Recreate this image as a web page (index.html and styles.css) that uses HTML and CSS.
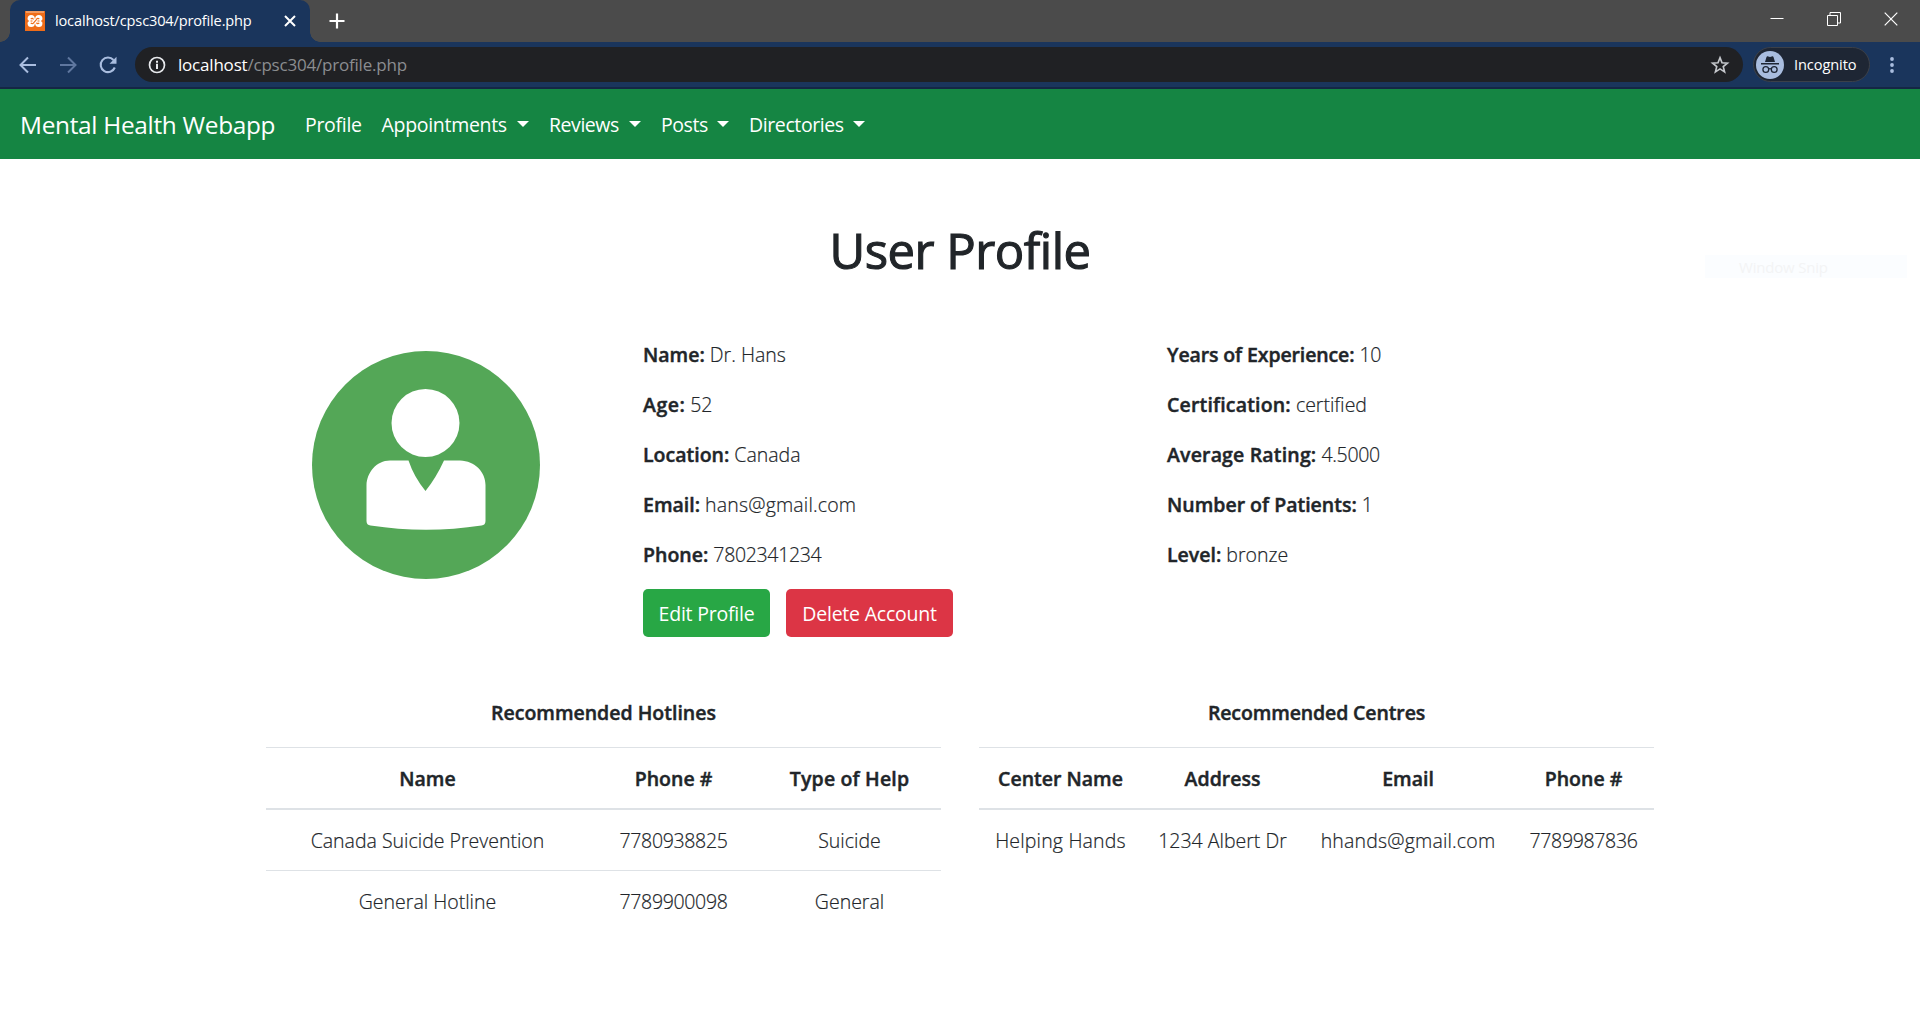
FILE: index.html
```html
<!DOCTYPE html>
<html lang="en">
<head>
<meta charset="utf-8">
<title>User Profile</title>
<link rel="stylesheet" href="styles.css">
</head>
<body>
<header class="browser">
  <div class="tabstrip">
    <div class="tab">
      <svg class="favicon" viewBox="0 0 20 20"><rect width="20" height="20" fill="#ef6c18"/><path d="M1 1h18" stroke="#f5b080" stroke-width="1.400"/><g fill="#fff"><circle cx="6.200" cy="7.600" r="3.600"/><circle cx="13.800" cy="7.600" r="3.600"/><circle cx="6.200" cy="12.500" r="3.600"/><circle cx="13.800" cy="12.500" r="3.600"/><path d="M6 8h8v4.500H6z"/></g><path d="M14.300 7.900Q12.400 6.600 11.400 8.600L8.600 11.800Q7.600 13.300 5.700 12.100M5.700 7.900Q7.600 6.600 8.500 8.500M11.500 11.600Q12.400 13.300 14.300 12.100M2 10H4M5.500 10H7.500M16 10h2M12.500 10h2" fill="none" stroke="#ef6c18" stroke-width="1.200"/></svg>
      <span class="tab-title">localhost/cpsc304/profile.php</span>
      <svg class="tab-close" viewBox="0 0 12 12"><path d="M1 1l10 10M11 1L1 11" stroke="#fff" stroke-width="2"/></svg>
    </div>
    <svg class="new-tab" viewBox="0 0 16 16"><path d="M8 .5v15M.5 8h15" stroke="#fff" stroke-width="2.200"/></svg>
    <div class="window-controls">
      <svg viewBox="0 0 14 14"><path d="M.5 6.500h13" stroke="#fff"/></svg>
      <svg viewBox="0 0 14 14"><path d="M.5 3.500h10v10h-10zM3 3.500V.5h10.500v10.500h-3" fill="none" stroke="#fff"/></svg>
      <svg viewBox="0 0 14 14"><path d="M.7.7l12.600 12.600M13.300.7L.7 13.300" stroke="#fff" stroke-width="1.200"/></svg>
    </div>
  </div>
  <div class="toolbar">
    <svg class="tool" viewBox="0 0 18 18"><path d="M17 9H2M9 1.500L1.500 9 9 16.500" fill="none" stroke="#a9bddf" stroke-width="2"/></svg>
    <svg class="tool" viewBox="0 0 18 18"><path d="M1 9h15M9 1.500L16.500 9 9 16.500" fill="none" stroke="#5f779f" stroke-width="2"/></svg>
    <svg class="tool" viewBox="0 0 18 18"><path d="M15.800 11.500A7.300 7.300 0 1 1 14.500 4" fill="none" stroke="#a9bddf" stroke-width="2.100"/><path d="M17.500.8v7h-7z" fill="#a9bddf"/></svg>
    <div class="address">
      <svg class="info" viewBox="0 0 18 18"><circle cx="9" cy="9" r="7.500" fill="none" stroke="#e8eaed" stroke-width="1.700"/><path d="M9 7.800v5.200M9 4.700v2" stroke="#e8eaed" stroke-width="2"/></svg>
      <span class="url"><span class="host">localhost</span>/cpsc304/profile.php</span>
      <svg class="star" viewBox="0 0 24 24"><path d="M12 3.200l2.400 6.100 6.500.4-5 4.200 1.600 6.300-5.500-3.500-5.500 3.500 1.600-6.300-5-4.200 6.500-.4z" fill="none" stroke="#c4c7cb" stroke-width="2"/></svg>
    </div>
    <div class="incognito">
      <svg viewBox="0 0 28 28"><circle cx="14" cy="14" r="14" fill="#a9bddf"/><path d="M9 11l1.500-5c.3-.8 1-.9 1.700-.6l1.800.6 1.800-.6c.7-.3 1.400-.2 1.700.6L19 11zM5 12h18v1.500H5z" fill="#1e2634"/><g fill="none" stroke="#1e2634" stroke-width="1.300"><circle cx="9.800" cy="18.500" r="2.900"/><circle cx="18.200" cy="18.500" r="2.900"/><path d="M12.700 18q1.300-.8 2.600 0"/></g></svg>
      <span>Incognito</span>
    </div>
    <svg class="menu" viewBox="0 0 4 16"><g fill="#a9bddf"><circle cx="2" cy="2" r="1.900"/><circle cx="2" cy="8" r="1.900"/><circle cx="2" cy="14" r="1.900"/></g></svg>
  </div>
</header>
<nav class="navbar">
  <a class="brand">Mental Health Webapp</a>
  <a class="link profile">Profile</a>
  <a class="link appointments">Appointments</a><i class="caret"></i>
  <a class="link reviews">Reviews</a><i class="caret"></i>
  <a class="link posts">Posts</a><i class="caret"></i>
  <a class="link directories">Directories</a><i class="caret"></i>
</nav>
<main>
  <h1>User Profile</h1>
  <section class="profile-row">
    <svg class="avatar" viewBox="0 0 228 228"><circle cx="114" cy="114" r="114" fill="#54a757"/><circle cx="113.500" cy="72" r="34" fill="#fff"/><path d="M78 109.500H96.500Q102 126 113.500 140Q124 127 132 109.500H148C163 110 173.500 121 173.500 134V170Q173.500 174 169.500 174.500Q114 183 58.500 174.500Q54.500 174 54.500 170V134C55 122 64 109.500 78 109.500Z" fill="#fff"/></svg>
    <div class="details">
      <p><b>Name:</b> Dr. Hans</p>
      <p><b class="wider">Age:</b> <span class="num">52</span></p>
      <p><b>Location:</b> Canada</p>
      <p><b>Email:</b> <span class="wide">hans@gmail.com</span></p>
      <p><b>Phone:</b> <span class="num">7802341234</span></p>
      <div class="actions"><a class="btn edit">Edit Profile</a><a class="btn delete">Delete Account</a></div>
    </div>
    <div class="details">
      <p><b class="tight">Years of Experience:</b> <span class="num">10</span></p>
      <p><b class="wide">Certification:</b> certified</p>
      <p><b class="wide">Average Rating:</b> <span class="num">4.5000</span></p>
      <p><b>Number of Patients:</b> <span class="num">1</span></p>
      <p><b>Level:</b> bronze</p>
    </div>
  </section>
  <section class="tables">
    <div>
      <h2>Recommended Hotlines</h2>
      <table>
        <colgroup><col class="c323"><col class="c169"><col class="c183"></colgroup>
        <thead><tr><th>Name</th><th>Phone #</th><th class="wide">Type of Help</th></tr></thead>
        <tbody>
          <tr><td>Canada Suicide Prevention</td><td class="num">7780938825</td><td>Suicide</td></tr>
          <tr><td>General Hotline</td><td class="num">7789900098</td><td>General</td></tr>
        </tbody>
      </table>
    </div>
    <div>
      <h2 class="tight">Recommended Centres</h2>
      <table>
        <colgroup><col class="c163"><col class="c161"><col class="c210"><col class="c141"></colgroup>
        <thead><tr><th>Center Name</th><th>Address</th><th>Email</th><th>Phone #</th></tr></thead>
        <tbody>
          <tr><td class="wide">Helping Hands</td><td>1234 Albert Dr</td><td class="wide">hhands@gmail.com</td><td class="num">7789987836</td></tr>
        </tbody>
      </table>
    </div>
  </section>
</main>
<div class="snip">Window Snip</div>
</body>
</html>
```
FILE: styles.css
```css
* { box-sizing: border-box; }
body {
  margin: 0;
  height: 1030px;
  overflow: hidden;
  background: #fff;
  color: #212529;
  font: 300 19.5px/30px "Open Sans", "Noto Sans", sans-serif;
}
svg { display: block; flex: none; }
.browser { height: 89px; background: #1a355c; border-bottom: 2px solid #142744; font-weight: 400; }
.tabstrip { height: 42px; display: flex; align-items: center; background: #4b4b4b; padding-left: 10px; }
.tab {
  position: relative;
  width: 300px;
  height: 42px;
  display: flex;
  align-items: center;
  padding-left: 15px;
  background: #1a355c;
  border-radius: 10px 10px 0 0;
}
.tab::before, .tab::after {
  content: "";
  position: absolute;
  bottom: 0;
  width: 10px;
  height: 10px;
  background: radial-gradient(circle at 0 0, transparent 9.5px, #1a355c 10px);
}
.tab::before { left: -10px; }
.tab::after { right: -10px; background: radial-gradient(circle at 100% 0, transparent 9.5px, #1a355c 10px); }
.favicon { width: 20px; height: 20px; }
.tab-title { color: #fff; font-size: 14.6px; margin-left: 10px; padding-bottom: 2px; width: 229px; white-space: nowrap; letter-spacing: -0.17px; }
.tab-close { width: 12px; height: 12px; }
.new-tab { width: 16px; height: 16px; margin-left: 19px; }
.window-controls { display: flex; gap: 43px; margin: -5px 22px 0 auto; }
.window-controls svg { width: 14px; height: 14px; }
.toolbar { height: 45px; display: flex; align-items: center; padding-left: 19px; }
.tool { width: 18px; height: 18px; margin-right: 22px; }
.address {
  width: 1608px;
  height: 35px;
  margin-left: -4px;
  display: flex;
  align-items: center;
  padding: 0 12px 0 13px;
  border-radius: 18px;
  background: #202124;
}
.info { width: 18px; height: 18px; }
.url { margin-left: 12px; font-size: 17px; color: #8b8d90; white-space: nowrap; letter-spacing: -0.2px; }
.host { color: #fff; }
.star { width: 20px; height: 20px; margin: 0 1px 0 auto; }
.incognito {
  width: 117px;
  height: 35px;
  margin-left: 10px;
  display: flex;
  align-items: center;
  padding-left: 2px;
  border: 1px solid #3c4048;
  border-radius: 18px;
  background: #1e2634;
  color: #fff;
  font-size: 14.6px;
  letter-spacing: -0.1px;
}
.incognito svg { width: 28px; height: 28px; margin-right: 10px; }
.incognito span { padding-bottom: 2px; }
.menu { width: 4px; height: 16px; margin-left: 20px; }
.navbar { height: 70px; display: flex; align-items: center; padding: 2px 0 0 20px; background: #158543; color: #fff; font-weight: 400; white-space: nowrap; letter-spacing: -0.3px; }
.brand { width: 285px; font-size: 24.4px; }
.link { color: #fff; }
.profile { width: 76.5px; }
.appointments { width: 135.5px; }
.reviews { width: 80px; letter-spacing: -0.45px; }
.posts { width: 56px; letter-spacing: -0.45px; }
.directories { width: 104px; letter-spacing: -0.4px; }
.caret { width: 12px; margin: 0 20px 2px 0; border: 6px solid transparent; border-top-color: #fff; border-bottom: 0; }
h1 { margin: 0; padding-top: 61px; height: 180px; text-align: center; font-size: 49px; line-height: 60px; font-weight: 400; letter-spacing: -0.5px; -webkit-text-stroke: 1.1px; }
.profile-row { display: flex; height: 345px; padding-left: 312px; }
.avatar { width: 228px; height: 228px; margin: 12px 103px 0 0; }
.details { width: 524px; padding-top: 1px; }
.details p { margin: 0 0 20px; white-space: nowrap; }
.profile-row p, td { -webkit-text-stroke: 0.2px; }
.profile-row b, th, h2 { font-weight: 600; -webkit-text-stroke: 0.45px; }
.wide { letter-spacing: 0.17px; }
.wider { letter-spacing: 0.5px; }
.tight { letter-spacing: -0.12px; }
.num { letter-spacing: -0.33px; }
.actions { display: flex; gap: 16px; margin-top: -1px; }
.btn { height: 48px; display: flex; align-items: center; justify-content: center; padding-top: 2px; border-radius: 5px; color: #fff; font-weight: 400; white-space: nowrap; letter-spacing: -0.22px; }
.edit { width: 127px; background: #28a745; }
.delete { width: 167px; background: #dc3545; }
.tables { display: flex; gap: 38px; padding-left: 266px; }
.tables > div { width: 675px; }
h2 { margin: 0; padding: 14px 0 19px; text-align: center; font-size: 19.5px; line-height: 30px; }
table { width: 675px; table-layout: fixed; border-collapse: collapse; text-align: center; white-space: nowrap; }
th, td { padding: 16px 0 14px; border-top: 1px solid #dee2e6; }
th { border-bottom: 2px solid #dee2e6; }
.c323 { width: 323px; }
.c169 { width: 169px; }
.c183 { width: 183px; }
.c163 { width: 163px; }
.c161 { width: 161px; }
.c210 { width: 210px; }
.c141 { width: 141px; }
.snip { position: absolute; left: 1705px; top: 255px; width: 202px; height: 23px; padding-left: 34px; background: #fbfdff; color: #f3f4f5; font-size: 15px; line-height: 24px; font-weight: 400; letter-spacing: -0.2px; }
```
